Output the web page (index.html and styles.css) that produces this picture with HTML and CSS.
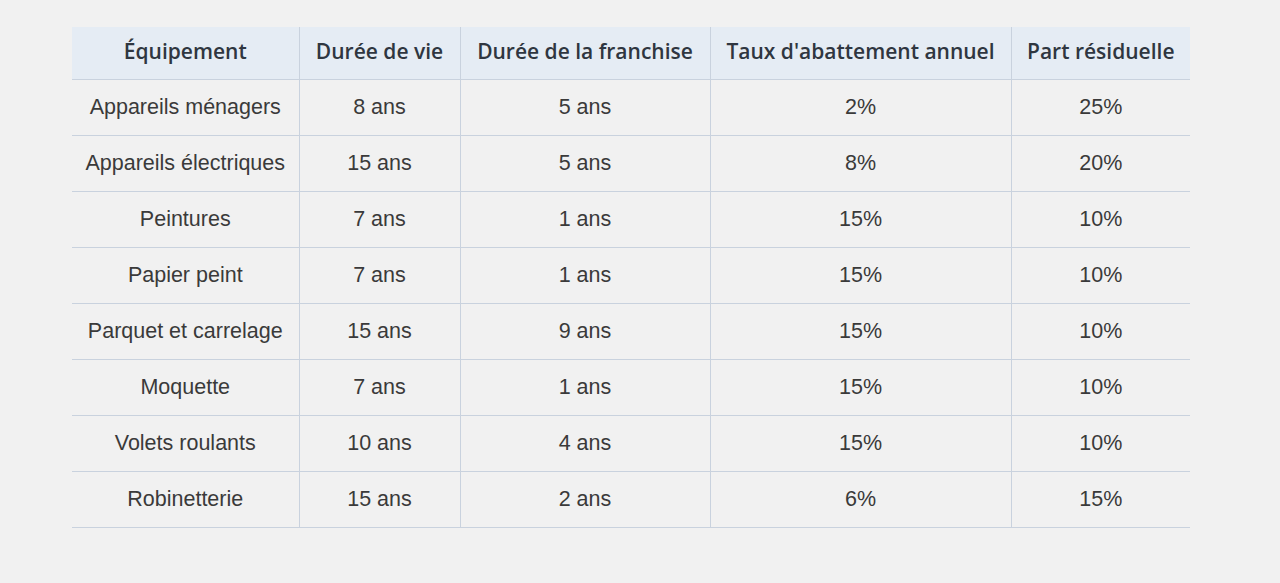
FILE: index.html
```html
<!DOCTYPE html>
<html lang="fr">
<head>
<meta charset="utf-8">
<title>Équipements</title>
<link rel="stylesheet" href="styles.css">
</head>
<body>
<main class="page">
  <table class="grid">
    <colgroup>
      <col class="c1"><col class="c2"><col class="c3"><col class="c4"><col class="c5">
    </colgroup>
    <thead>
      <tr>
        <th>Équipement</th>
        <th>Durée de vie</th>
        <th>Durée de la franchise</th>
        <th>Taux d'abattement annuel</th>
        <th>Part résiduelle</th>
      </tr>
    </thead>
    <tbody>
      <tr><td>Appareils ménagers</td><td>8 ans</td><td>5 ans</td><td>2%</td><td>25%</td></tr>
      <tr><td>Appareils électriques</td><td>15 ans</td><td>5 ans</td><td>8%</td><td>20%</td></tr>
      <tr><td>Peintures</td><td>7 ans</td><td>1 ans</td><td>15%</td><td>10%</td></tr>
      <tr><td>Papier peint</td><td>7 ans</td><td>1 ans</td><td>15%</td><td>10%</td></tr>
      <tr><td>Parquet et carrelage</td><td>15 ans</td><td>9 ans</td><td>15%</td><td>10%</td></tr>
      <tr><td>Moquette</td><td>7 ans</td><td>1 ans</td><td>15%</td><td>10%</td></tr>
      <tr><td>Volets roulants</td><td>10 ans</td><td>4 ans</td><td>15%</td><td>10%</td></tr>
      <tr><td>Robinetterie</td><td>15 ans</td><td>2 ans</td><td>6%</td><td>15%</td></tr>
    </tbody>
  </table>
</main>
</body>
</html>
```

FILE: styles.css
```css
html, body {
  margin: 0;
  padding: 0;
  background: #f1f1f1;
}
.page {
  padding: 27px 0 0 72px;
}
.grid {
  border-collapse: collapse;
  table-layout: fixed;
  width: 1118px;
  font-family: "Liberation Sans", Arial, sans-serif;
  color: #3a3a3a;
}
.c1 { width: 227px; }
.c2 { width: 161px; }
.c3 { width: 250px; }
.c4 { width: 301px; }
.c5 { width: 179px; }
.grid th {
  height: 48px;
  padding: 0 0 4px;
  background: #e5ecf4;
  font-family: "Open Sans", Lato, sans-serif;
  font-weight: 600;
  font-size: 21px;
  line-height: 24px;
  color: #2f3640;
  border-left: 1px solid #c9d2de;
  border-bottom: 1px solid #c9d2de;
}
.grid td {
  height: 55px;
  padding: 0;
  text-align: center;
  font-size: 21.5px;
  border-left: 1px solid #c9d2de;
  border-bottom: 1px solid #c9d2de;
}
.grid th:first-child,
.grid td:first-child {
  border-left: none;
}
```
